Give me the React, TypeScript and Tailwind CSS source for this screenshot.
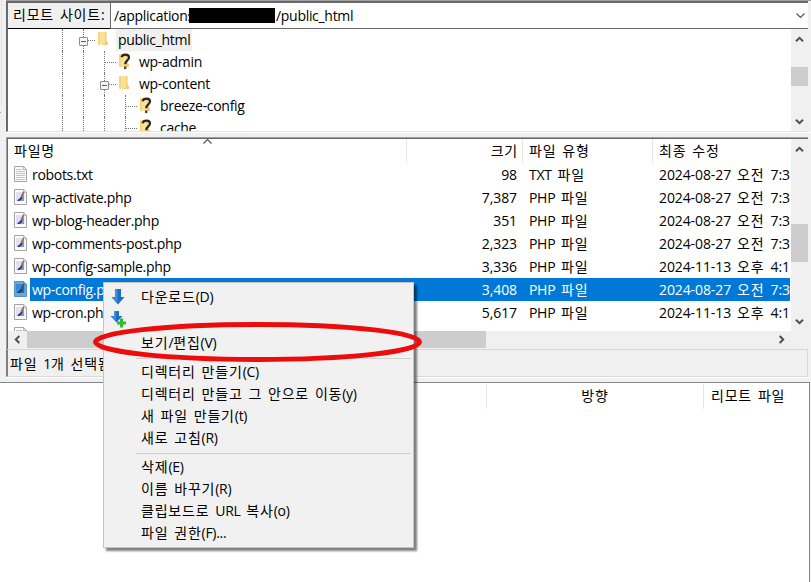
import { ReactNode } from "react";
import clsx from "clsx";

interface FileRow {
  name: string;
  size: string;
  type: string;
  modified: string;
  icon: "txt" | "php";
  selected?: boolean;
}

const files: FileRow[] = [
  { name: "robots.txt", size: "98", type: "TXT 파일", modified: "2024-08-27 오전 7:3", icon: "txt" },
  { name: "wp-activate.php", size: "7,387", type: "PHP 파일", modified: "2024-08-27 오전 7:3", icon: "php" },
  { name: "wp-blog-header.php", size: "351", type: "PHP 파일", modified: "2024-08-27 오전 7:3", icon: "php" },
  { name: "wp-comments-post.php", size: "2,323", type: "PHP 파일", modified: "2024-08-27 오전 7:3", icon: "php" },
  { name: "wp-config-sample.php", size: "3,336", type: "PHP 파일", modified: "2024-11-13 오후 4:1", icon: "php" },
  { name: "wp-config.php", size: "3,408", type: "PHP 파일", modified: "2024-08-27 오전 7:3", icon: "php", selected: true },
  { name: "wp-cron.php", size: "5,617", type: "PHP 파일", modified: "2024-11-13 오후 4:1", icon: "php" },
];

// Latin text and Hangul are set at slightly different widths
const Ko = ({ children }: { children: ReactNode }) => (
  <span className="[word-spacing:2.5px]">
    {String(children)
      .split(/([가-힣]+)/)
      .map((part, i) => (
        <span key={i} className={i % 2 ? "tracking-[0.8px]" : ""}>
          {part}
        </span>
      ))}
  </span>
);

const Chevron = ({ dir, thin }: { dir: "up" | "down" | "left" | "right"; thin?: boolean }) => (
  <svg
    width="9"
    height="9"
    viewBox="0 0 9 9"
    fill="none"
    stroke={thin ? "#555" : "#505050"}
    strokeWidth={thin ? 1.2 : 2}
    className={clsx(
      "shrink-0",
      dir === "down" && "rotate-180",
      dir === "left" && "-rotate-90",
      dir === "right" && "rotate-90"
    )}
  >
    <path d={thin ? "M0.5 6.5 L4.5 2.5 L8.5 6.5" : "M1 6.3 L4.5 2.8 L8 6.3"} />
  </svg>
);

const FolderIcon = ({ unknown }: { unknown?: boolean }) => (
  <svg width="16" height="18" viewBox="0 0 16 18" className="shrink-0">
    <path d="M3 1h8v12H3z" fill="#fbe09a" />
    <path d="M10 1h1.500v8.500L13 11.500v2.500H5l5-1.500z" fill="#f0ce74" />
    <path d="M3 1l2 1v12.500L3 13.500z" fill="#f8d775" />
    {unknown && (
      <>
        <path
          d="M5.600 4.200C6.400 0.900 13 0.700 13 4.500C13 7.500 9.200 7.300 9.200 11.300"
          fill="none"
          stroke="#28241d"
          strokeWidth="2.200"
        />
        <rect x="8" y="13.500" width="2.400" height="2.600" fill="#4b463d" />
      </>
    )}
  </svg>
);

const FileIcon = ({ kind, selected }: { kind: "txt" | "php"; selected?: boolean }) => (
  <svg width="14" height="17" viewBox="0 0 14 17" className="shrink-0">
    <path
      d="M0.500 0.500h9l3 3v12h-12z"
      fill={selected ? "#6aa9de" : "#fbfbfb"}
      stroke={selected ? "#5b90bd" : "#a3a3a3"}
    />
    <path d="M9.500 0.500v3h3" fill="none" stroke={selected ? "#5b90bd" : "#b5b5b5"} />
    {kind === "txt" ? (
      <path d="M2 3.500h6M2 5.500h9M2 7.500h9M2 9.500h9M2 11.500h9M2 13.500h9" stroke="#c4c4c4" />
    ) : (
      <>
        <path d="M2 3h8.500v9H2z" fill={selected ? "#3c8bd0" : "#dde1f4"} />
        <path d="M2.500 12L10 5v7z" fill={selected ? "#1f6db5" : "#8995cf"} />
        <path d="M4 11.500c2-.2 3-1.500 3.800-3.500" fill="none" stroke="#25305c" strokeWidth="1.500" />
        <path d="M7.300 8.200L9.600 3" stroke={selected ? "#37536f" : "#a5643b"} strokeWidth="1.700" />
      </>
    )}
  </svg>
);

const DownloadIcon = () => (
  <svg width="14" height="18" viewBox="0 0 14 18">
    <path d="M4 1h6v8h3.500L7 16.500 0.500 9H4z" fill="#1b6fc9" />
    <path d="M4 1h2.500v13.500L1.500 9.500H4z" fill="#3c8fe0" />
  </svg>
);

const QueueIcon = () => (
  <svg width="16" height="18" viewBox="0 0 16 18">
    <path d="M4 1h5v5h3.500L6.500 12.500 0.500 6H4z" fill="#1b6fc9" />
    <path d="M4 1h2v10L1.500 6.500H4z" fill="#3c8fe0" />
    <path d="M10 8.500h3v3h3v3h-3v3h-3v-3H7v-3h3z" fill="#2fbd2f" />
  </svg>
);

type Gutter = "line" | "tee";

interface TreeRowProps {
  gutter: Gutter[];
  label: string;
  unknown?: boolean;
  expander?: boolean;
  current?: boolean;
}

const treeRows: TreeRowProps[] = [
  { gutter: ["line", "tee"], label: "public_html", expander: true, current: true },
  { gutter: ["line", "line", "tee"], label: "wp-admin", unknown: true },
  { gutter: ["line", "line", "tee"], label: "wp-content", expander: true },
  { gutter: ["line", "line", "line", "tee"], label: "breeze-config", unknown: true },
  { gutter: ["line", "line", "line", "tee"], label: "cache", unknown: true },
];

const TreeRow = ({ gutter, label, unknown, expander, current }: TreeRowProps) => (
  <div className="flex h-[22px] shrink-0 items-center pl-[54px]">
    {gutter.map((cell, i) => {
      const last = i === gutter.length - 1;
      return (
        <div
          key={i}
          className={clsx(
            "relative flex h-full shrink-0 items-center border-l border-dotted border-[#777]",
            last ? "w-[12px]" : "w-[21px]"
          )}
        >
          {cell === "tee" && <div className="w-full border-t border-dotted border-[#777]" />}
          {last && expander && (
            <div className="absolute top-[8px] -left-[5px] flex size-[9px] items-center justify-center rounded-[1px] border border-[#8c8c8c] bg-[#f6f6f6]">
              <div className="h-px w-[5px] bg-[#3f5ca8]" />
            </div>
          )}
        </div>
      );
    })}
    <FolderIcon unknown={unknown} />
    <span
      className={clsx("ml-[5px] h-[22px] pr-[2px] pl-[2px] leading-[22px]", current && "bg-[#f0f0f0]")}
    >
      {label}
    </span>
  </div>
);

const MenuItem = ({ icon, children }: { icon?: ReactNode; children?: string }) => (
  <div className="flex h-[22px] items-center leading-[22px]">
    <div className="flex w-[28px] justify-center">{icon}</div>
    <span className="ml-[9px]">{children && <Ko>{children}</Ko>}</span>
  </div>
);

const MenuSeparator = () => <div className="mt-[4px] mr-[2px] mb-[2px] ml-[32px] h-px bg-[#d0d0d0]" />;

const ContextMenu = () => (
  <div className="absolute top-[282px] left-[103px] h-[266px] w-[311px] border border-[#c4c4c4] bg-[#f1f1f1] pt-[3px] shadow-[3px_3px_2px_rgba(0,0,0,0.5)]">
    <MenuItem icon={<DownloadIcon />}>다운로드(D)</MenuItem>
    <MenuItem icon={<QueueIcon />} />
    <div className="h-[2px]" />
    <MenuItem>보기/편집(V)</MenuItem>
    <MenuSeparator />
    <MenuItem>디렉터리 만들기(C)</MenuItem>
    <MenuItem>디렉터리 만들고 그 안으로 이동(y)</MenuItem>
    <MenuItem>새 파일 만들기(t)</MenuItem>
    <MenuItem>새로 고침(R)</MenuItem>
    <MenuSeparator />
    <MenuItem>삭제(E)</MenuItem>
    <MenuItem>이름 바꾸기(R)</MenuItem>
    <MenuItem>클립보드로 URL 복사(o)</MenuItem>
    <MenuItem>파일 권한(F)...</MenuItem>
  </div>
);

export default function App() {
  return (
    <div className="relative flex h-[582px] w-[811px] flex-col overflow-hidden bg-[#f0f0f0] font-['Open_Sans','Noto_Sans_CJK_KR',sans-serif] text-[14px] tracking-[-0.3px] whitespace-nowrap text-black">
      {/* Remote site address and directory tree */}
      <div className="flex h-[133px] shrink-0">
        <div className="w-[6px] shrink-0">
          <div className="h-[108px] w-[2px] border-r border-b border-white border-r-[#e3e3e3]" />
          <div className="mt-[4px] h-[21px] w-px border-t border-[#a0a0a0]" />
        </div>
        <div className="flex flex-1 flex-col border-b border-white">
          <div className="h-px shrink-0 bg-[#a0a0a0]" />
          <div className="mr-[3px] flex h-[131px] flex-col border-t-2 border-b border-l-2 border-t-[#696969] border-b-[#e3e3e3] border-l-[#696969] bg-white">
            <div className="flex h-[26px] shrink-0">
              <div className="w-[102px] border-b border-black bg-[#f0f0f0] pl-[5px] leading-[24px]">
                <Ko>리모트 사이트:</Ko>
              </div>
              <div className="flex flex-1 items-center border-b border-l border-[#696969] pr-[3px] pl-[3px]">
                <span className="w-[75px] overflow-hidden">/applications</span>
                <span className="h-[15px] w-[86px] bg-black" />
                <span className="ml-[1px] flex-1">/public_html</span>
                <Chevron dir="down" thin />
              </div>
            </div>
            <div className="flex h-[102px]">
              <div className="flex flex-1 flex-col overflow-hidden">
                {treeRows.map((row) => (
                  <TreeRow key={row.label} {...row} />
                ))}
              </div>
              <div className="flex w-[17px] flex-col items-center bg-[#f0f0f0] pt-[6px] pb-[5px]">
                <Chevron dir="up" />
                <div className="mt-[23px] h-[19px] w-full bg-[#cdcdcd]" />
                <div className="flex-1" />
                <Chevron dir="down" />
              </div>
            </div>
          </div>
        </div>
      </div>

      {/* Remote file list */}
      <div className="mt-[4px] mr-[3px] ml-[6px] flex h-[212px] shrink-0 flex-col border-t border-l border-[#a0a0a0]">
        <div className="flex h-[193px] shrink-0 border-t border-l border-[#696969] bg-white">
          <div className="flex flex-1 flex-col overflow-hidden">
            <div className="flex h-[24px] shrink-0 leading-[23px]">
              <div className="relative w-[399px] border-r border-[#e5e5e5] pl-[6px]">
                <Ko>파일명</Ko>
                <div className="absolute -top-[2px] left-[195px] leading-none">
                  <Chevron dir="up" thin />
                </div>
              </div>
              <div className="w-[116px] border-r border-[#e5e5e5] pr-[4px] text-right">
                <Ko>크기</Ko>
              </div>
              <div className="w-[130px] border-r border-[#e5e5e5] pl-[6px]">
                <Ko>파일 유형</Ko>
              </div>
              <div className="pl-[6px]">
                <Ko>최종 수정</Ko>
              </div>
            </div>
            {files.map((file) => (
              <div key={file.name} className="flex h-[23px] w-[782px] shrink-0 items-center overflow-hidden">
                <div className="w-[22px] shrink-0 pl-[6px]">
                  <FileIcon kind={file.icon} selected={file.selected} />
                </div>
                <div
                  className={clsx(
                    "flex h-full flex-1 overflow-hidden leading-[23px]",
                    file.selected && "bg-[#0078d7] text-white"
                  )}
                >
                  <div className="w-[377px] shrink-0 pl-[2px]">{file.name}</div>
                  <div className="w-[110px] shrink-0 text-right tracking-[-0.1px]">{file.size}</div>
                  <div className="w-[130px] shrink-0 pl-[12px]">
                    <Ko>{file.type}</Ko>
                  </div>
                  <div className="w-[143px] shrink-0 pl-[12px] tracking-[-0.1px]">
                    <Ko>{file.modified}</Ko>
                  </div>
                </div>
              </div>
            ))}
            {/* Row scrolled mostly out of view */}
            <div className="flex h-[23px] shrink-0 items-center pl-[6px]">
              <FileIcon kind="txt" />
            </div>
          </div>
          <div className="flex w-[17px] flex-col items-center bg-[#f0f0f0] pt-[6px] pb-[5px]">
            <Chevron dir="up" />
            <div className="mt-[70px] h-[38px] w-full bg-[#cdcdcd]" />
            <div className="flex-1" />
            <Chevron dir="down" />
          </div>
        </div>
        <div className="flex h-[17px] items-center border-l border-[#696969] pl-[5px]">
          <Chevron dir="left" />
          <div className="ml-[5px] h-full w-[459px] bg-[#cdcdcd]" />
          <div className="flex-1" />
          <div className="mr-[22px] flex">
            <Chevron dir="right" />
          </div>
        </div>
        <div className="h-px border-l border-l-[#696969]" />
      </div>

      {/* Status line */}
      <div className="mr-[3px] ml-[6px] h-[28px] shrink-0 border-t border-r border-b border-l-2 border-t-[#d5d5d5] border-r-[#d9d9d9] border-b-[#d9d9d9] border-l-[#808080] pl-[2px] leading-[28px]">
        <Ko>파일 1개 선택됨</Ko>
      </div>
      <div className="ml-[6px] h-px shrink-0 bg-white" />

      {/* Transfer queue */}
      <div className="mt-[4px] mr-[1px] flex flex-1 flex-col border-t border-r border-[#828790] bg-white">
        <div className="flex h-[26px] pt-px leading-[23px]">
          <div className="w-[487px] border-r border-[#e5e5e5]" />
          <div className="w-[217px] border-r border-[#e5e5e5] text-center">
            <Ko>방향</Ko>
          </div>
          <div className="pl-[7px]">
            <Ko>리모트 파일</Ko>
          </div>
        </div>
      </div>

      <ContextMenu />

      {/* Callout around the view/edit entry */}
      <svg className="absolute top-[318px] left-[88px]" width="340" height="48" viewBox="0 0 340 48">
        <ellipse cx="169.500" cy="24" rx="162" ry="17.500" fill="none" stroke="#ec0c0c" strokeWidth="5" />
      </svg>
    </div>
  );
}
